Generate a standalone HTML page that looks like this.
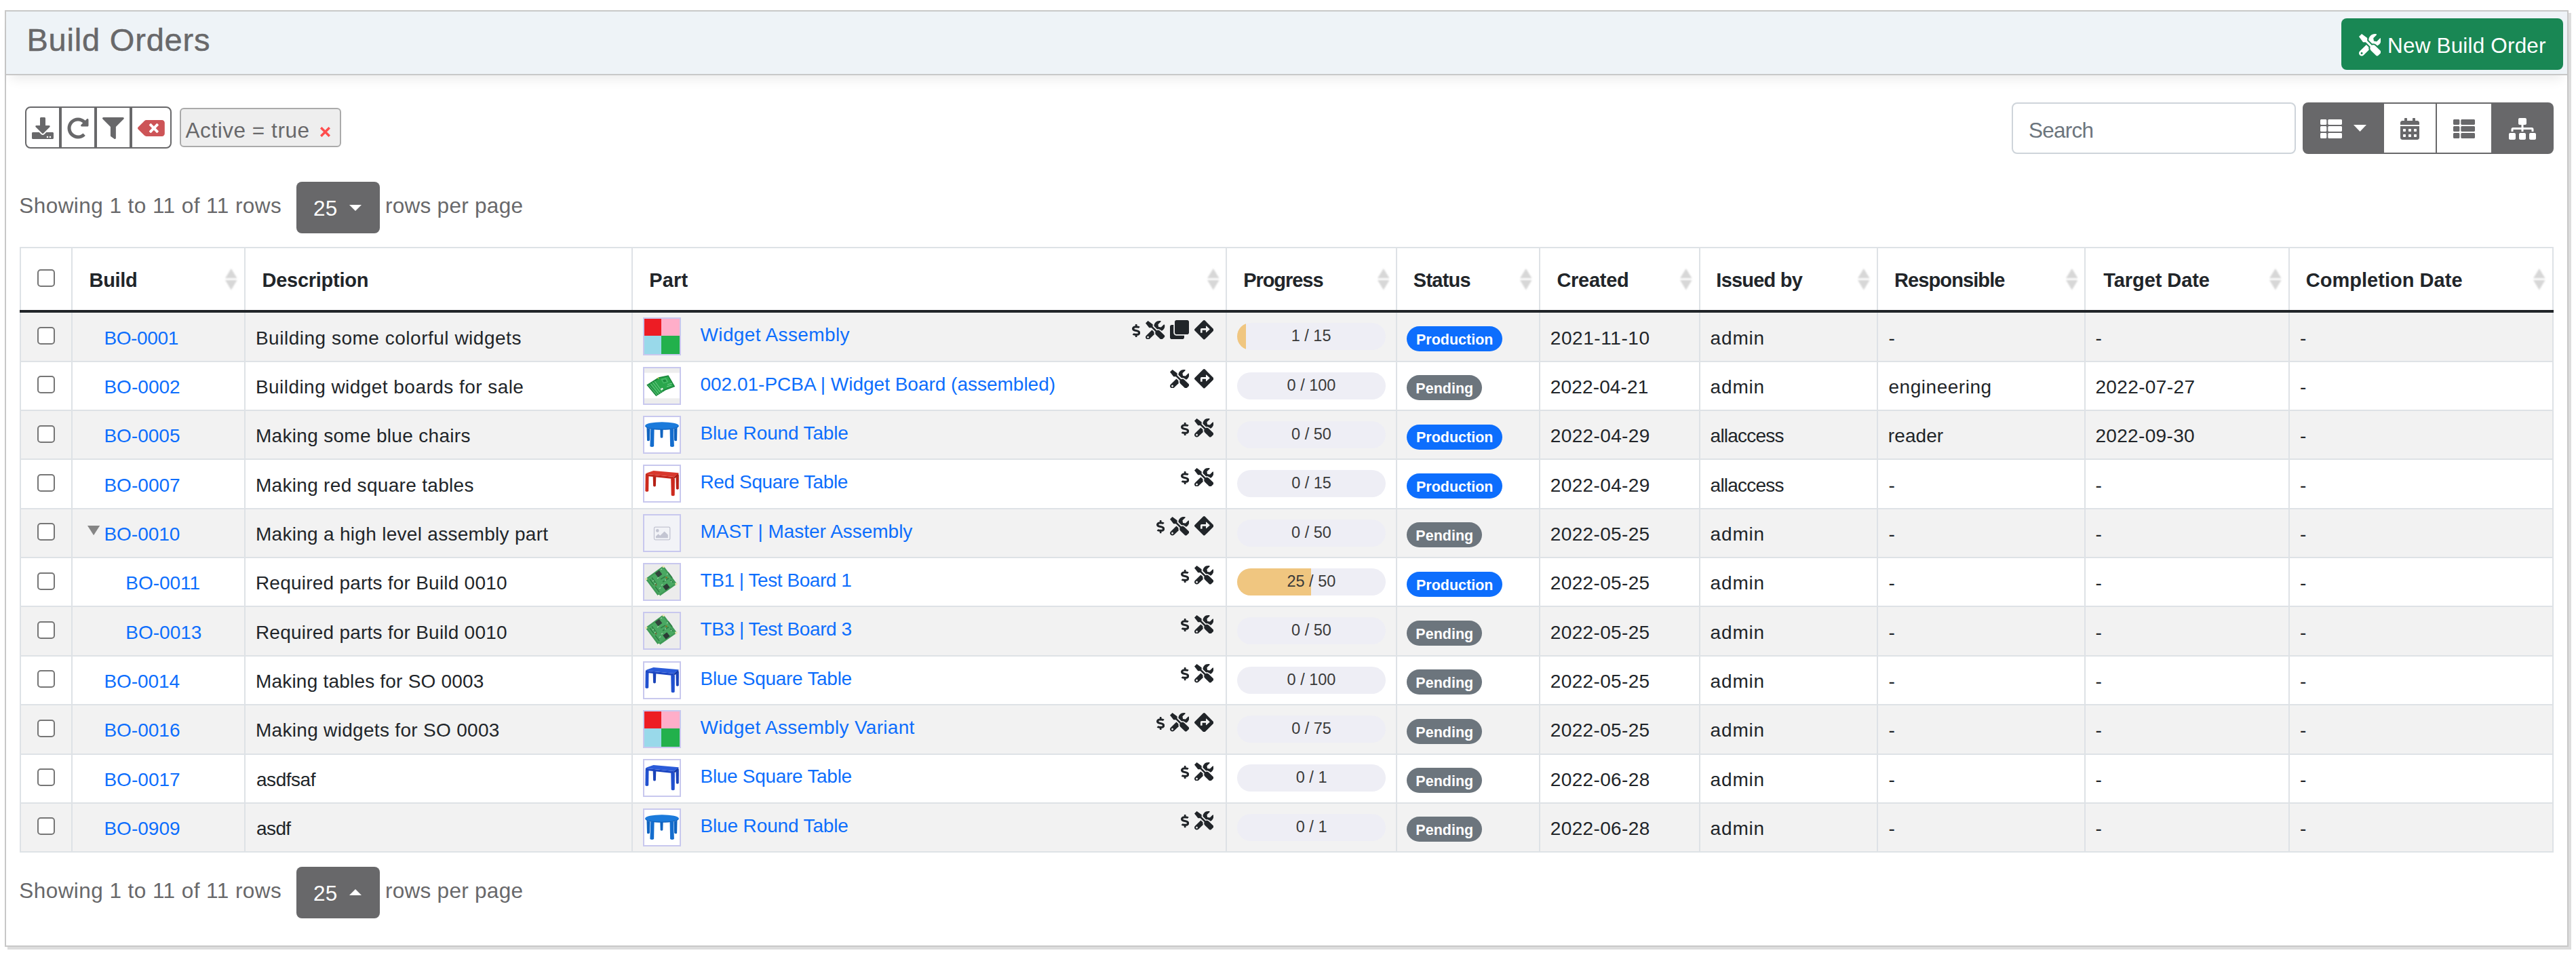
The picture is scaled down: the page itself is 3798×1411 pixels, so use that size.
<!DOCTYPE html>
<html lang="en"><head><meta charset="utf-8"><title>Build Orders</title>
<style>
html,body{margin:0;padding:0;background:#fff;}
body{width:3798px;height:1411px;position:relative;overflow:hidden;font-family:"Liberation Sans",sans-serif;}
#p div,#p span,#p svg{position:absolute;}
#p span{white-space:pre;line-height:1;}
#p svg svg{position:static;}
</style></head><body>
<div id="p">
<div style="left:7px;top:15px;width:3780px;height:1381px;background:#fff;border:2px solid #c8c8c8;box-sizing:border-box;box-shadow:4px 4px 0 #dddddd;"></div>
<div style="left:9px;top:17px;width:3776px;height:92px;background:#eef3f7;border-bottom:2px solid #c8c8c8;box-shadow:0 13px 16px -7px rgba(0,0,0,.08);"></div>
<span style="left:39.44px;top:32.00px;font-size:47px;color:#68686a;letter-spacing:0.804px;line-height:53px;-webkit-text-stroke:0.5px #68686a;">Build Orders</span>
<div style="left:3452px;top:27px;width:327px;height:76px;background:#198754;border-radius:8px;"></div>
<svg style="left:3477.50px;top:50.00px;width:32.50px;height:32.50px;" viewBox="0 0 512 512" preserveAspectRatio="none"><path fill="#fff" d="M501.1 395.7L384 278.6c-23.1-23.1-57.6-27.6-85.4-13.9L192 158.1V96L64 0 0 64l96 128h62.1l106.6 106.6c-13.6 27.8-9.2 62.3 13.9 85.4l117.1 117.1c14.6 14.6 38.2 14.6 52.7 0l52.7-52.7c14.5-14.6 14.5-38.2 0-52.7zM331.7 225c28.3 0 54.9 11 74.9 31l19.4 19.4c15.8-6.9 30.8-16.5 43.8-29.5 37.1-37.1 49.7-89.3 37.9-136.7-2.2-9-13.5-12.1-20.1-5.5l-74.4 74.4-67.9-11.3L334 98.9l74.4-74.4c6.6-6.6 3.4-17.9-5.7-20.2-47.4-11.7-99.6.9-136.6 37.9-28.5 28.5-41.9 66.1-41.2 103.6l82.1 82.1c8.1-1.9 16.5-2.9 24.7-2.9zm-103.9 82l-56.7-56.7L18.7 402.8c-25 25-25 65.5 0 90.5s65.5 25 90.5 0l123.6-123.6c-7.6-19.9-9.9-41.6-5-62.7zM64 472c-13.2 0-24-10.8-24-24 0-13.3 10.7-24 24-24s24 10.7 24 24c0 13.2-10.7 24-24 24z"/></svg>
<span style="left:3520.02px;top:49.00px;font-size:31.5px;color:#fff;letter-spacing:0.173px;line-height:36px;">New Build Order</span>
<div style="left:37px;top:157px;width:52px;height:62px;box-sizing:border-box;border:2px solid #68686a;border-radius:8px 0 0 8px;background:#fff;"></div>
<div style="left:89px;top:157px;width:52px;height:62px;box-sizing:border-box;border:2px solid #68686a;border-radius:0;background:#fff;"></div>
<div style="left:141px;top:157px;width:52px;height:62px;box-sizing:border-box;border:2px solid #68686a;border-radius:0;background:#fff;"></div>
<div style="left:193px;top:157px;width:60px;height:62px;box-sizing:border-box;border:2px solid #68686a;border-radius:0 8px 8px 0;background:#fff;"></div>
<svg style="left:47.10px;top:172.90px;width:32.00px;height:32.00px;" viewBox="0 0 512 512" preserveAspectRatio="none"><path fill="#68686a" d="M216 0h80c13.3 0 24 10.7 24 24v168h87.7c17.8 0 26.7 21.5 14.1 34.1L269.7 378.3c-7.5 7.5-19.8 7.5-27.3 0L90.1 226.1c-12.6-12.6-3.7-34.1 14.1-34.1H192V24c0-13.3 10.7-24 24-24zm296 376v112c0 13.3-10.7 24-24 24H24c-13.3 0-24-10.7-24-24V376c0-13.3 10.7-24 24-24h146.7l49 49c20.1 20.1 52.5 20.1 72.6 0l49-49H488c13.3 0 24 10.7 24 24zm-124 88c0-11-9-20-20-20s-20 9-20 20 9 20 20 20 20-9 20-20zm64 0c0-11-9-20-20-20s-20 9-20 20 9 20 20 20 20-9 20-20z"/></svg>
<svg style="left:98.90px;top:172.80px;width:32.00px;height:32.00px;" viewBox="0 0 512 512" preserveAspectRatio="none"><path fill="#68686a" d="M256.455 8c66.269.119 126.437 26.233 170.859 68.685l35.715-35.715C478.149 25.851 504 36.559 504 57.941V192c0 13.255-10.745 24-24 24H345.941c-21.382 0-32.09-25.851-16.971-40.971l41.75-41.75c-30.864-28.899-70.801-44.907-113.23-45.273-92.398-.798-170.283 73.977-169.484 169.442C88.764 348.009 162.184 424 256 424c41.127 0 79.997-14.678 110.629-41.556 4.743-4.161 11.906-3.908 16.368.553l39.662 39.662c4.872 4.872 4.631 12.815-.482 17.433C378.202 479.813 319.926 504 256 504 119.034 504 8.001 392.967 8 256.002 7.999 119.193 119.646 7.755 256.455 8z"/></svg>
<svg style="left:151.00px;top:172.90px;width:31.80px;height:32.00px;" viewBox="0 0 512 512" preserveAspectRatio="none"><path fill="#68686a" d="M487.976 0H24.028C2.71 0-8.047 25.866 7.058 40.971L192 225.941V432c0 7.831 3.821 15.17 10.237 19.662l80 55.98C298.02 518.69 320 507.493 320 487.98V225.941l184.947-184.97C520.021 25.896 509.338 0 487.976 0z"/></svg>
<svg style="left:203.20px;top:172.90px;width:39.80px;height:32.00px;" viewBox="0 0 640 512" preserveAspectRatio="none"><path fill="#cd5457" d="M576 64H205.26A63.97 63.97 0 0 0 160 82.75L9.37 233.37c-12.5 12.5-12.5 32.76 0 45.25L160 429.25c12 12 28.28 18.75 45.25 18.75H576c35.35 0 64-28.65 64-64V128c0-35.35-28.65-64-64-64zm-84.69 254.06c6.25 6.25 6.25 16.38 0 22.63l-22.62 22.62c-6.25 6.25-16.38 6.25-22.63 0L384 301.25l-62.06 62.06c-6.25 6.25-16.38 6.25-22.63 0l-22.62-22.62c-6.25-6.25-6.25-16.38 0-22.63L338.75 256l-62.06-62.06c-6.25-6.25-6.25-16.38 0-22.63l22.62-22.62c6.25-6.25 16.38-6.25 22.63 0L384 210.75l62.06-62.06c6.25-6.25 16.38-6.25 22.63 0l22.62 22.62c6.25 6.25 6.25 16.38 0 22.63L429.25 256l62.06 62.06z"/></svg>
<div style="left:265px;top:159px;width:238px;height:58px;box-sizing:border-box;border:2px solid #aaa;border-radius:6px;background:#eee;"></div>
<span style="left:273.54px;top:174.00px;font-size:31.5px;color:#68686a;letter-spacing:0.542px;line-height:36px;">Active = true</span>
<svg style="left:471.7px;top:187px;width:15px;height:15px" viewBox="0 0 15 15"><path d="M1.2 1.2 L13.8 13.8 M13.8 1.2 L1.2 13.8" stroke="#ff4d4d" stroke-width="3.5" fill="none"/></svg>
<div style="left:2966px;top:151px;width:418.5px;height:75.5px;box-sizing:border-box;border:2px solid #ced4da;border-radius:8px;background:#fff;"></div>
<span style="left:2991.07px;top:174.00px;font-size:31.5px;color:#6c757d;letter-spacing:-0.766px;line-height:36px;">Search</span>
<div style="left:3395px;top:151px;width:370px;height:75.5px;border-radius:8px;background:#68686a;"></div>
<div style="left:3514.7px;top:153px;width:158.3px;height:71.5px;background:#fff;"></div>
<div style="left:3590.5px;top:151px;width:2.5px;height:75.5px;background:#68686a;"></div>
<svg style="left:3421.00px;top:174.00px;width:32.00px;height:32.00px;" viewBox="0 0 512 512" preserveAspectRatio="none"><path fill="#fff" d="M149.333 216v80c0 13.255-10.745 24-24 24H24c-13.255 0-24-10.745-24-24v-80c0-13.255 10.745-24 24-24h101.333c13.255 0 24 10.745 24 24zM0 376v80c0 13.255 10.745 24 24 24h101.333c13.255 0 24-10.745 24-24v-80c0-13.255-10.745-24-24-24H24c-13.255 0-24 10.745-24 24zM125.333 32H24C10.745 32 0 42.745 0 56v80c0 13.255 10.745 24 24 24h101.333c13.255 0 24-10.745 24-24V56c0-13.255-10.745-24-24-24zm80 448H488c13.255 0 24-10.745 24-24v-80c0-13.255-10.745-24-24-24H205.333c-13.255 0-24 10.745-24 24v80c0 13.255 10.745 24 24 24zm-24-424v80c0 13.255 10.745 24 24 24H488c13.255 0 24-10.745 24-24V56c0-13.255-10.745-24-24-24H205.333c-13.255 0-24 10.745-24 24zm24 264H488c13.255 0 24-10.745 24-24v-80c0-13.255-10.745-24-24-24H205.333c-13.255 0-24 10.745-24 24v80c0 13.255 10.745 24 24 24z"/></svg>
<svg style="left:3470px;top:184px;width:19px;height:10px" viewBox="0 0 19 10"><path d="M0 0 H19 L9.5 10 Z" fill="#fff"/></svg>
<svg style="left:3539.00px;top:173.50px;width:28.00px;height:32.00px;" viewBox="0 0 448 512" preserveAspectRatio="none"><path fill="#68686a" d="M0 464c0 26.5 21.5 48 48 48h352c26.5 0 48-21.5 48-48V192H0v272zm320-196c0-6.6 5.4-12 12-12h40c6.6 0 12 5.4 12 12v40c0 6.6-5.4 12-12 12h-40c-6.6 0-12-5.4-12-12v-40zm0 128c0-6.6 5.4-12 12-12h40c6.6 0 12 5.4 12 12v40c0 6.6-5.4 12-12 12h-40c-6.6 0-12-5.4-12-12v-40zM192 268c0-6.6 5.4-12 12-12h40c6.6 0 12 5.4 12 12v40c0 6.6-5.4 12-12 12h-40c-6.6 0-12-5.4-12-12v-40zm0 128c0-6.6 5.4-12 12-12h40c6.6 0 12 5.4 12 12v40c0 6.6-5.4 12-12 12h-40c-6.6 0-12-5.4-12-12v-40zM64 268c0-6.6 5.4-12 12-12h40c6.6 0 12 5.4 12 12v40c0 6.6-5.4 12-12 12H76c-6.6 0-12-5.4-12-12v-40zm0 128c0-6.6 5.4-12 12-12h40c6.6 0 12 5.4 12 12v40c0 6.6-5.4 12-12 12H76c-6.6 0-12-5.4-12-12v-40zM400 64h-48V16c0-8.8-7.2-16-16-16h-32c-8.8 0-16 7.2-16 16v48H160V16c0-8.8-7.2-16-16-16h-32c-8.8 0-16 7.2-16 16v48H48C21.5 64 0 85.5 0 112v48h448v-48c0-26.5-21.5-48-48-48z"/></svg>
<svg style="left:3616.50px;top:174.00px;width:32.00px;height:32.00px;" viewBox="0 0 512 512" preserveAspectRatio="none"><path fill="#68686a" d="M149.333 216v80c0 13.255-10.745 24-24 24H24c-13.255 0-24-10.745-24-24v-80c0-13.255 10.745-24 24-24h101.333c13.255 0 24 10.745 24 24zM0 376v80c0 13.255 10.745 24 24 24h101.333c13.255 0 24-10.745 24-24v-80c0-13.255-10.745-24-24-24H24c-13.255 0-24 10.745-24 24zM125.333 32H24C10.745 32 0 42.745 0 56v80c0 13.255 10.745 24 24 24h101.333c13.255 0 24-10.745 24-24V56c0-13.255-10.745-24-24-24zm80 448H488c13.255 0 24-10.745 24-24v-80c0-13.255-10.745-24-24-24H205.333c-13.255 0-24 10.745-24 24v80c0 13.255 10.745 24 24 24zm-24-424v80c0 13.255 10.745 24 24 24H488c13.255 0 24-10.745 24-24V56c0-13.255-10.745-24-24-24H205.333c-13.255 0-24 10.745-24 24zm24 264H488c13.255 0 24-10.745 24-24v-80c0-13.255-10.745-24-24-24H205.333c-13.255 0-24 10.745-24 24v80c0 13.255 10.745 24 24 24z"/></svg>
<svg style="left:3698.50px;top:173.50px;width:40.00px;height:32.00px;" viewBox="0 0 640 512" preserveAspectRatio="none"><path fill="#fff" d="M128 352H32c-17.67 0-32 14.33-32 32v96c0 17.67 14.33 32 32 32h96c17.67 0 32-14.33 32-32v-96c0-17.67-14.33-32-32-32zm-24-80h192v48h48v-48h192v48h48v-57.59c0-21.17-17.23-38.41-38.41-38.41H344v-64h40c17.67 0 32-14.33 32-32V32c0-17.67-14.33-32-32-32H256c-17.67 0-32 14.33-32 32v96c0 17.67 14.33 32 32 32h40v64H94.41C73.23 224 56 241.23 56 262.41V320h48v-48zm264 80h-96c-17.67 0-32 14.33-32 32v96c0 17.67 14.33 32 32 32h96c17.67 0 32-14.33 32-32v-96c0-17.67-14.33-32-32-32zm240 0h-96c-17.67 0-32 14.33-32 32v96c0 17.67 14.33 32 32 32h96c17.67 0 32-14.33 32-32v-96c0-17.67-14.33-32-32-32z"/></svg>
<span style="left:28.27px;top:285.00px;font-size:31.5px;color:#68686a;letter-spacing:0.446px;line-height:36px;">Showing 1 to 11 of 11 rows</span>
<div style="left:437px;top:268px;width:122.5px;height:75.5px;border-radius:8px;background:#68686a;"></div>
<span style="left:462.12px;top:289.00px;font-size:31.5px;color:#fff;letter-spacing:0.069px;line-height:36px;">25</span>
<svg style="left:515px;top:301.5px;width:18px;height:9px" viewBox="0 0 18 9"><path d="M0 0 H18 L9 9 Z" fill="#fff"/></svg>
<span style="left:567.91px;top:285.00px;font-size:31.5px;color:#68686a;letter-spacing:0.290px;line-height:36px;">rows per page</span>
<span style="left:28.27px;top:1295.00px;font-size:31.5px;color:#68686a;letter-spacing:0.446px;line-height:36px;">Showing 1 to 11 of 11 rows</span>
<div style="left:437px;top:1278px;width:122.5px;height:75.5px;border-radius:8px;background:#68686a;"></div>
<span style="left:462.12px;top:1299.00px;font-size:31.5px;color:#fff;letter-spacing:0.069px;line-height:36px;">25</span>
<svg style="left:515px;top:1310.5px;width:18px;height:9px" viewBox="0 0 18 9"><path d="M0 9 H18 L9 0 Z" fill="#fff"/></svg>
<span style="left:567.91px;top:1295.00px;font-size:31.5px;color:#68686a;letter-spacing:0.290px;line-height:36px;">rows per page</span>
<div style="left:31.00px;top:461.00px;width:3732.00px;height:71.00px;background:#f2f2f2;"></div>
<div style="left:31.00px;top:606.00px;width:3732.00px;height:70.00px;background:#f2f2f2;"></div>
<div style="left:31.00px;top:751.00px;width:3732.00px;height:70.00px;background:#f2f2f2;"></div>
<div style="left:31.00px;top:895.00px;width:3732.00px;height:71.00px;background:#f2f2f2;"></div>
<div style="left:31.00px;top:1040.00px;width:3732.00px;height:71.00px;background:#f2f2f2;"></div>
<div style="left:31.00px;top:1185.00px;width:3732.00px;height:70.00px;background:#f2f2f2;"></div>
<div style="left:29.00px;top:364.00px;width:3736.00px;height:2.00px;background:#dee2e6;"></div>
<div style="left:29.00px;top:1255.00px;width:3736.00px;height:2.00px;background:#dee2e6;"></div>
<div style="left:29.00px;top:364.00px;width:2.00px;height:893.00px;background:#dee2e6;"></div>
<div style="left:3763.00px;top:364.00px;width:2.00px;height:893.00px;background:#dee2e6;"></div>
<div style="left:105.00px;top:364.00px;width:2.00px;height:893.00px;background:#dee2e6;"></div>
<div style="left:360.00px;top:364.00px;width:2.00px;height:893.00px;background:#dee2e6;"></div>
<div style="left:931.00px;top:364.00px;width:2.00px;height:893.00px;background:#dee2e6;"></div>
<div style="left:1807.00px;top:364.00px;width:2.00px;height:893.00px;background:#dee2e6;"></div>
<div style="left:2058.00px;top:364.00px;width:2.00px;height:893.00px;background:#dee2e6;"></div>
<div style="left:2269.00px;top:364.00px;width:2.00px;height:893.00px;background:#dee2e6;"></div>
<div style="left:2505.00px;top:364.00px;width:2.00px;height:893.00px;background:#dee2e6;"></div>
<div style="left:2767.00px;top:364.00px;width:2.00px;height:893.00px;background:#dee2e6;"></div>
<div style="left:3073.00px;top:364.00px;width:2.00px;height:893.00px;background:#dee2e6;"></div>
<div style="left:3374.00px;top:364.00px;width:2.00px;height:893.00px;background:#dee2e6;"></div>
<div style="left:29.00px;top:532.00px;width:3736.00px;height:2.00px;background:#dee2e6;"></div>
<div style="left:29.00px;top:604.00px;width:3736.00px;height:2.00px;background:#dee2e6;"></div>
<div style="left:29.00px;top:676.00px;width:3736.00px;height:2.00px;background:#dee2e6;"></div>
<div style="left:29.00px;top:749.00px;width:3736.00px;height:2.00px;background:#dee2e6;"></div>
<div style="left:29.00px;top:821.00px;width:3736.00px;height:2.00px;background:#dee2e6;"></div>
<div style="left:29.00px;top:893.00px;width:3736.00px;height:2.00px;background:#dee2e6;"></div>
<div style="left:29.00px;top:966.00px;width:3736.00px;height:2.00px;background:#dee2e6;"></div>
<div style="left:29.00px;top:1038.00px;width:3736.00px;height:2.00px;background:#dee2e6;"></div>
<div style="left:29.00px;top:1111.00px;width:3736.00px;height:2.00px;background:#dee2e6;"></div>
<div style="left:29.00px;top:1183.00px;width:3736.00px;height:2.00px;background:#dee2e6;"></div>
<div style="left:29.00px;top:457.00px;width:3736.00px;height:4.00px;background:#212529;"></div>
<div style="left:55px;top:397px;width:26px;height:26px;box-sizing:border-box;border:2px solid #767676;border-radius:5px;background:#fff;"></div>
<span style="left:131.56px;top:397.00px;font-size:29px;color:#212529;letter-spacing:-0.359px;line-height:32px;font-weight:700;">Build</span>
<svg style="left:332.1px;top:396.2px;width:17.6px;height:31.4px;filter:blur(0.8px)" viewBox="0 0 17 30" preserveAspectRatio="none"><path d="M8.5 0 L17 13.7 H0 Z M0 16.3 H17 L8.5 30 Z" fill="#d7d7d7"/></svg>
<span style="left:386.46px;top:397.00px;font-size:29px;color:#212529;letter-spacing:-0.259px;line-height:32px;font-weight:700;">Description</span>
<span style="left:957.26px;top:397.00px;font-size:29px;color:#212529;letter-spacing:0.160px;line-height:32px;font-weight:700;">Part</span>
<svg style="left:1780.0px;top:396.2px;width:17.6px;height:31.4px;filter:blur(0.8px)" viewBox="0 0 17 30" preserveAspectRatio="none"><path d="M8.5 0 L17 13.7 H0 Z M0 16.3 H17 L8.5 30 Z" fill="#d7d7d7"/></svg>
<span style="left:1833.16px;top:397.00px;font-size:29px;color:#212529;letter-spacing:-1.043px;line-height:32px;font-weight:700;">Progress</span>
<svg style="left:2030.6px;top:396.2px;width:17.6px;height:31.4px;filter:blur(0.8px)" viewBox="0 0 17 30" preserveAspectRatio="none"><path d="M8.5 0 L17 13.7 H0 Z M0 16.3 H17 L8.5 30 Z" fill="#d7d7d7"/></svg>
<span style="left:2083.86px;top:397.00px;font-size:29px;color:#212529;letter-spacing:-0.781px;line-height:32px;font-weight:700;">Status</span>
<svg style="left:2241.4px;top:396.2px;width:17.6px;height:31.4px;filter:blur(0.8px)" viewBox="0 0 17 30" preserveAspectRatio="none"><path d="M8.5 0 L17 13.7 H0 Z M0 16.3 H17 L8.5 30 Z" fill="#d7d7d7"/></svg>
<span style="left:2295.41px;top:397.00px;font-size:29px;color:#212529;letter-spacing:-0.264px;line-height:32px;font-weight:700;">Created</span>
<svg style="left:2477.0px;top:396.2px;width:17.6px;height:31.4px;filter:blur(0.8px)" viewBox="0 0 17 30" preserveAspectRatio="none"><path d="M8.5 0 L17 13.7 H0 Z M0 16.3 H17 L8.5 30 Z" fill="#d7d7d7"/></svg>
<span style="left:2530.36px;top:397.00px;font-size:29px;color:#212529;letter-spacing:-0.784px;line-height:32px;font-weight:700;">Issued by</span>
<svg style="left:2739.0px;top:396.2px;width:17.6px;height:31.4px;filter:blur(0.8px)" viewBox="0 0 17 30" preserveAspectRatio="none"><path d="M8.5 0 L17 13.7 H0 Z M0 16.3 H17 L8.5 30 Z" fill="#d7d7d7"/></svg>
<span style="left:2792.96px;top:397.00px;font-size:29px;color:#212529;letter-spacing:-0.890px;line-height:32px;font-weight:700;">Responsible</span>
<svg style="left:3045.6px;top:396.2px;width:17.6px;height:31.4px;filter:blur(0.8px)" viewBox="0 0 17 30" preserveAspectRatio="none"><path d="M8.5 0 L17 13.7 H0 Z M0 16.3 H17 L8.5 30 Z" fill="#d7d7d7"/></svg>
<span style="left:3101.27px;top:397.00px;font-size:29px;color:#212529;letter-spacing:-0.067px;line-height:32px;font-weight:700;">Target Date</span>
<svg style="left:3346.4px;top:396.2px;width:17.6px;height:31.4px;filter:blur(0.8px)" viewBox="0 0 17 30" preserveAspectRatio="none"><path d="M8.5 0 L17 13.7 H0 Z M0 16.3 H17 L8.5 30 Z" fill="#d7d7d7"/></svg>
<span style="left:3399.71px;top:397.00px;font-size:29px;color:#212529;letter-spacing:0.034px;line-height:32px;font-weight:700;">Completion Date</span>
<svg style="left:3735.4px;top:396.2px;width:17.6px;height:31.4px;filter:blur(0.8px)" viewBox="0 0 17 30" preserveAspectRatio="none"><path d="M8.5 0 L17 13.7 H0 Z M0 16.3 H17 L8.5 30 Z" fill="#d7d7d7"/></svg>
<div style="left:55px;top:482px;width:26px;height:26px;box-sizing:border-box;border:2px solid #767676;border-radius:5px;background:#fff;"></div>
<span style="left:153.40px;top:483.00px;font-size:28px;color:#0d6efd;letter-spacing:-0.368px;line-height:31px;">BO-0001</span>
<span style="left:376.90px;top:483.00px;font-size:28px;color:#212529;letter-spacing:0.513px;line-height:31px;">Building some colorful widgets</span>
<svg style="left:948px;top:468.4px;width:56px;height:56px" viewBox="0 0 56 56"><rect x="1" y="1" width="54" height="54" fill="#fff" stroke="#c8c8ee" stroke-width="2"/><svg x="2" y="2" width="52" height="52" viewBox="0 0 52 52"><rect width="25" height="25" fill="#ed1c24"/><rect x="25" width="27" height="25" fill="#ffaec9"/><rect y="25" width="25" height="27" fill="#99d9ea"/><rect x="25" y="25" width="27" height="27" fill="#22b14c"/></svg></svg>
<span style="left:1032.50px;top:478.00px;font-size:28px;color:#0d6efd;letter-spacing:0.379px;line-height:31px;">Widget Assembly</span>
<svg style="left:1760.80px;top:471.96px;width:28.60px;height:28.60px;" viewBox="0 0 512 512" preserveAspectRatio="none"><path fill="#212529" d="M502.61 233.32L278.68 9.39c-12.52-12.52-32.83-12.52-45.36 0L9.39 233.32c-12.52 12.53-12.52 32.83 0 45.36l223.93 223.93c12.52 12.53 32.83 12.53 45.36 0l223.93-223.93c12.52-12.53 12.52-32.83 0-45.36zm-100.98 12.56l-84.21 77.73c-5.12 4.73-13.43 1.1-13.43-5.88V264h-96v64c0 4.42-3.58 8-8 8h-32c-4.42 0-8-3.58-8-8v-80c0-17.67 14.33-32 32-32h112v-53.73c0-6.97 8.3-10.61 13.43-5.88l84.21 77.73c3.43 3.17 3.43 8.59 0 11.76z"/></svg>
<svg style="left:1725.30px;top:471.96px;width:28.00px;height:28.00px;" viewBox="0 0 512 512" preserveAspectRatio="none"><path fill="#212529" d="M464 0c26.51 0 48 21.49 48 48v288c0 26.51-21.49 48-48 48H176c-26.51 0-48-21.49-48-48V48c0-26.51 21.49-48 48-48h288M176 416c-44.112 0-80-35.888-80-80V128H48c-26.51 0-48 21.49-48 48v288c0 26.51 21.49 48 48 48h288c26.51 0 48-21.49 48-48v-48H176z"/></svg>
<svg style="left:1689.30px;top:472.56px;width:28.30px;height:27.60px;" viewBox="0 0 512 512" preserveAspectRatio="none"><path fill="#212529" d="M501.1 395.7L384 278.6c-23.1-23.1-57.6-27.6-85.4-13.9L192 158.1V96L64 0 0 64l96 128h62.1l106.6 106.6c-13.6 27.8-9.2 62.3 13.9 85.4l117.1 117.1c14.6 14.6 38.2 14.6 52.7 0l52.7-52.7c14.5-14.6 14.5-38.2 0-52.7zM331.7 225c28.3 0 54.9 11 74.9 31l19.4 19.4c15.8-6.9 30.8-16.5 43.8-29.5 37.1-37.1 49.7-89.3 37.9-136.7-2.2-9-13.5-12.1-20.1-5.5l-74.4 74.4-67.9-11.3L334 98.9l74.4-74.4c6.6-6.6 3.4-17.9-5.7-20.2-47.4-11.7-99.6.9-136.6 37.9-28.5 28.5-41.9 66.1-41.2 103.6l82.1 82.1c8.1-1.9 16.5-2.9 24.7-2.9zm-103.9 82l-56.7-56.7L18.7 402.8c-25 25-25 65.5 0 90.5s65.5 25 90.5 0l123.6-123.6c-7.6-19.9-9.9-41.6-5-62.7zM64 472c-13.2 0-24-10.8-24-24 0-13.3 10.7-24 24-24s24 10.7 24 24c0 13.2-10.7 24-24 24z"/></svg>
<svg style="left:1669.20px;top:477.96px;width:12.30px;height:19.20px;" viewBox="0 0 288 512" preserveAspectRatio="none"><path fill="#212529" d="M209.2 233.4l-108-31.6C88.7 198.2 80 186.5 80 173.5c0-16.3 13.2-29.5 29.5-29.5h66.3c12.2 0 24.2 3.7 34.2 10.5 6.1 4.1 14.3 3.1 19.5-2l34.8-34c7.1-6.9 6.1-18.4-1.8-24.5C238 74.8 207.4 64.1 176 64V16c0-8.8-7.2-16-16-16h-32c-8.8 0-16 7.2-16 16v48h-2.5C45.8 64-5.4 118.7.5 183.6c4.2 46.1 39.4 83.6 83.8 96.6l102.5 30c12.5 3.7 21.2 15.3 21.2 28.3 0 16.3-13.2 29.5-29.5 29.5h-66.3C100 368 88 364.3 78 357.5c-6.1-4.1-14.3-3.1-19.5 2l-34.8 34c-7.1 6.9-6.1 18.4 1.8 24.5 24.5 19.2 55.1 29.9 86.5 30v48c0 8.8 7.2 16 16 16h32c8.8 0 16-7.2 16-16v-48.2c46.6-.9 90.3-28.6 105.7-72.7 21.5-61.6-14.6-124.8-72.5-141.7z"/></svg>
<div style="left:1823.80px;top:476.26px;width:219.30px;height:40.00px;background:#eeeef5;border-radius:20px;overflow:hidden;"></div>
<div style="left:1823.8px;top:476.26px;width:219.3px;height:40px;border-radius:20px;overflow:hidden;"><div style="left:0;top:0;width:13.2px;height:40px;background:#f0c680;"></div></div>
<span style="left:1903.70px;top:482.00px;font-size:23.5px;color:#3a3a3a;letter-spacing:0.000px;line-height:26px;">1 / 15</span>
<div style="left:2074.00px;top:480.86px;width:141.00px;height:37.20px;background:#0d6efd;border-radius:18.6px;"></div>
<span style="left:2087.96px;top:489.00px;font-size:21.5px;color:#fff;letter-spacing:0.001px;line-height:24px;font-weight:700;">Production</span>
<span style="left:2285.79px;top:483.00px;font-size:28px;color:#212529;letter-spacing:0.572px;line-height:31px;">2021-11-10</span>
<span style="left:2521.61px;top:483.00px;font-size:28px;color:#212529;letter-spacing:0.811px;line-height:31px;">admin</span>
<span style="left:2784.46px;top:483.00px;font-size:28px;color:#212529;letter-spacing:0.000px;line-height:31px;">-</span>
<span style="left:3089.56px;top:483.00px;font-size:28px;color:#212529;letter-spacing:0.000px;line-height:31px;">-</span>
<span style="left:3391.06px;top:483.00px;font-size:28px;color:#212529;letter-spacing:0.000px;line-height:31px;">-</span>
<div style="left:55px;top:554px;width:26px;height:26px;box-sizing:border-box;border:2px solid #767676;border-radius:5px;background:#fff;"></div>
<span style="left:153.40px;top:555.00px;font-size:28px;color:#0d6efd;letter-spacing:0.039px;line-height:31px;">BO-0002</span>
<span style="left:376.90px;top:555.00px;font-size:28px;color:#212529;letter-spacing:0.457px;line-height:31px;">Building widget boards for sale</span>
<svg style="left:948px;top:540.7px;width:56px;height:56px" viewBox="0 0 56 56"><rect x="1" y="1" width="54" height="54" fill="#fff" stroke="#c8c8ee" stroke-width="2"/><svg x="2" y="2" width="52" height="52" viewBox="0 0 52 52"><rect width="52" height="52" fill="#fff"/><rect width="52" height="6.7" fill="#ededed"/><rect y="44.3" width="52" height="7.7" fill="#ededed"/><path d="M3.3 24.5 L21 13.2 L35.5 10.2 L45.3 27.1 L31 32.5 L17.3 41.2 Z" fill="#17873a"/><path d="M8 24 L22 15 L35 12 L43 26.5 L30 31 L18.5 38.5 Z" fill="#2aa64c"/><path d="M6 24.3 L19 40 M9 22.4 L21.5 38 M12 20.5 L24 36.3 M15 18.6 L26.5 34.6" stroke="#7fd096" stroke-width=".9" fill="none"/><path d="M24.5 16 L32 14.2 L35.5 20.3 L28 22.5 Z" fill="#49bd6a"/><path d="M26.8 17.2 L31 16.2 L33 19.6 L28.7 20.8 Z" fill="#1c8d3e"/><rect x="24.5" y="29.3" width="3" height="2.4" fill="#f4f4f4" transform="rotate(-20 26 30.5)"/><circle cx="20.5" cy="14.4" r="1" fill="#e8d44a"/><path d="M34 24 L41 22 M33 27 L40 25" stroke="#8fd9a4" stroke-width=".8"/></svg></svg>
<span style="left:1032.50px;top:551.00px;font-size:28px;color:#0d6efd;letter-spacing:-0.012px;line-height:31px;">002.01-PCBA | Widget Board (assembled)</span>
<svg style="left:1760.80px;top:544.30px;width:28.60px;height:28.60px;" viewBox="0 0 512 512" preserveAspectRatio="none"><path fill="#212529" d="M502.61 233.32L278.68 9.39c-12.52-12.52-32.83-12.52-45.36 0L9.39 233.32c-12.52 12.53-12.52 32.83 0 45.36l223.93 223.93c12.52 12.53 32.83 12.53 45.36 0l223.93-223.93c12.52-12.53 12.52-32.83 0-45.36zm-100.98 12.56l-84.21 77.73c-5.12 4.73-13.43 1.1-13.43-5.88V264h-96v64c0 4.42-3.58 8-8 8h-32c-4.42 0-8-3.58-8-8v-80c0-17.67 14.33-32 32-32h112v-53.73c0-6.97 8.3-10.61 13.43-5.88l84.21 77.73c3.43 3.17 3.43 8.59 0 11.76z"/></svg>
<svg style="left:1725.00px;top:544.90px;width:28.30px;height:27.60px;" viewBox="0 0 512 512" preserveAspectRatio="none"><path fill="#212529" d="M501.1 395.7L384 278.6c-23.1-23.1-57.6-27.6-85.4-13.9L192 158.1V96L64 0 0 64l96 128h62.1l106.6 106.6c-13.6 27.8-9.2 62.3 13.9 85.4l117.1 117.1c14.6 14.6 38.2 14.6 52.7 0l52.7-52.7c14.5-14.6 14.5-38.2 0-52.7zM331.7 225c28.3 0 54.9 11 74.9 31l19.4 19.4c15.8-6.9 30.8-16.5 43.8-29.5 37.1-37.1 49.7-89.3 37.9-136.7-2.2-9-13.5-12.1-20.1-5.5l-74.4 74.4-67.9-11.3L334 98.9l74.4-74.4c6.6-6.6 3.4-17.9-5.7-20.2-47.4-11.7-99.6.9-136.6 37.9-28.5 28.5-41.9 66.1-41.2 103.6l82.1 82.1c8.1-1.9 16.5-2.9 24.7-2.9zm-103.9 82l-56.7-56.7L18.7 402.8c-25 25-25 65.5 0 90.5s65.5 25 90.5 0l123.6-123.6c-7.6-19.9-9.9-41.6-5-62.7zM64 472c-13.2 0-24-10.8-24-24 0-13.3 10.7-24 24-24s24 10.7 24 24c0 13.2-10.7 24-24 24z"/></svg>
<div style="left:1823.80px;top:548.60px;width:219.30px;height:40.00px;background:#eeeef5;border-radius:20px;overflow:hidden;"></div>
<span style="left:1897.57px;top:555.00px;font-size:23.5px;color:#3a3a3a;letter-spacing:0.000px;line-height:26px;">0 / 100</span>
<div style="left:2074.00px;top:553.20px;width:110.80px;height:37.20px;background:#6c757d;border-radius:18.6px;"></div>
<span style="left:2087.36px;top:561.00px;font-size:21.5px;color:#fff;letter-spacing:0.012px;line-height:24px;font-weight:700;">Pending</span>
<span style="left:2285.79px;top:555.00px;font-size:28px;color:#212529;letter-spacing:0.150px;line-height:31px;">2022-04-21</span>
<span style="left:2521.61px;top:555.00px;font-size:28px;color:#212529;letter-spacing:0.811px;line-height:31px;">admin</span>
<span style="left:2784.51px;top:555.00px;font-size:28px;color:#212529;letter-spacing:0.525px;line-height:31px;">engineering</span>
<span style="left:3089.39px;top:555.00px;font-size:28px;color:#212529;letter-spacing:0.377px;line-height:31px;">2022-07-27</span>
<span style="left:3391.06px;top:555.00px;font-size:28px;color:#212529;letter-spacing:0.000px;line-height:31px;">-</span>
<div style="left:55px;top:627px;width:26px;height:26px;box-sizing:border-box;border:2px solid #767676;border-radius:5px;background:#fff;"></div>
<span style="left:153.40px;top:627.00px;font-size:28px;color:#0d6efd;letter-spacing:0.001px;line-height:31px;">BO-0005</span>
<span style="left:376.90px;top:627.00px;font-size:28px;color:#212529;letter-spacing:0.314px;line-height:31px;">Making some blue chairs</span>
<svg style="left:948px;top:613.0px;width:56px;height:56px" viewBox="0 0 56 56"><rect x="1" y="1" width="54" height="54" fill="#fff" stroke="#c8c8ee" stroke-width="2"/><svg x="2" y="2" width="52" height="52" viewBox="0 0 52 52"><rect width="52" height="52" fill="#fff"/><path d="M3.5 15.5 L8.5 17.5 L7.9 34.3 Q6 36.2 4 34.6 Z" fill="#0f63c0"/><path d="M43.5 17.5 L48.5 15.5 L48.1 34.6 Q46.2 36.2 44.2 34.3 Z" fill="#0f63c0"/><path d="M23.3 17 L27.7 17 L27.3 30 Q25.5 31.6 23.7 30 Z" fill="#0f63c0"/><path d="M9.3 17 L14.6 18 L14.1 43 Q11.3 45 8.4 43 Z" fill="#146dce"/><path d="M37.6 18 L43 17 L43.9 43 Q41 45 38.1 43 Z" fill="#146dce"/><ellipse cx="26" cy="13.6" rx="24.7" ry="5.2" fill="#0f63c0"/><ellipse cx="26" cy="12.4" rx="24.7" ry="5.1" fill="#1b7adb"/></svg></svg>
<span style="left:1032.50px;top:623.00px;font-size:28px;color:#0d6efd;letter-spacing:-0.140px;line-height:31px;">Blue Round Table</span>
<svg style="left:1761.10px;top:617.24px;width:28.30px;height:27.60px;" viewBox="0 0 512 512" preserveAspectRatio="none"><path fill="#212529" d="M501.1 395.7L384 278.6c-23.1-23.1-57.6-27.6-85.4-13.9L192 158.1V96L64 0 0 64l96 128h62.1l106.6 106.6c-13.6 27.8-9.2 62.3 13.9 85.4l117.1 117.1c14.6 14.6 38.2 14.6 52.7 0l52.7-52.7c14.5-14.6 14.5-38.2 0-52.7zM331.7 225c28.3 0 54.9 11 74.9 31l19.4 19.4c15.8-6.9 30.8-16.5 43.8-29.5 37.1-37.1 49.7-89.3 37.9-136.7-2.2-9-13.5-12.1-20.1-5.5l-74.4 74.4-67.9-11.3L334 98.9l74.4-74.4c6.6-6.6 3.4-17.9-5.7-20.2-47.4-11.7-99.6.9-136.6 37.9-28.5 28.5-41.9 66.1-41.2 103.6l82.1 82.1c8.1-1.9 16.5-2.9 24.7-2.9zm-103.9 82l-56.7-56.7L18.7 402.8c-25 25-25 65.5 0 90.5s65.5 25 90.5 0l123.6-123.6c-7.6-19.9-9.9-41.6-5-62.7zM64 472c-13.2 0-24-10.8-24-24 0-13.3 10.7-24 24-24s24 10.7 24 24c0 13.2-10.7 24-24 24z"/></svg>
<svg style="left:1741.00px;top:622.64px;width:12.30px;height:19.20px;" viewBox="0 0 288 512" preserveAspectRatio="none"><path fill="#212529" d="M209.2 233.4l-108-31.6C88.7 198.2 80 186.5 80 173.5c0-16.3 13.2-29.5 29.5-29.5h66.3c12.2 0 24.2 3.7 34.2 10.5 6.1 4.1 14.3 3.1 19.5-2l34.8-34c7.1-6.9 6.1-18.4-1.8-24.5C238 74.8 207.4 64.1 176 64V16c0-8.8-7.2-16-16-16h-32c-8.8 0-16 7.2-16 16v48h-2.5C45.8 64-5.4 118.7.5 183.6c4.2 46.1 39.4 83.6 83.8 96.6l102.5 30c12.5 3.7 21.2 15.3 21.2 28.3 0 16.3-13.2 29.5-29.5 29.5h-66.3C100 368 88 364.3 78 357.5c-6.1-4.1-14.3-3.1-19.5 2l-34.8 34c-7.1 6.9-6.1 18.4 1.8 24.5 24.5 19.2 55.1 29.9 86.5 30v48c0 8.8 7.2 16 16 16h32c8.8 0 16-7.2 16-16v-48.2c46.6-.9 90.3-28.6 105.7-72.7 21.5-61.6-14.6-124.8-72.5-141.7z"/></svg>
<div style="left:1823.80px;top:620.94px;width:219.30px;height:40.00px;background:#eeeef5;border-radius:20px;overflow:hidden;"></div>
<span style="left:1904.10px;top:627.00px;font-size:23.5px;color:#3a3a3a;letter-spacing:0.000px;line-height:26px;">0 / 50</span>
<div style="left:2074.00px;top:625.54px;width:141.00px;height:37.20px;background:#0d6efd;border-radius:18.6px;"></div>
<span style="left:2087.96px;top:633.00px;font-size:21.5px;color:#fff;letter-spacing:0.001px;line-height:24px;font-weight:700;">Production</span>
<span style="left:2285.79px;top:627.00px;font-size:28px;color:#212529;letter-spacing:0.367px;line-height:31px;">2022-04-29</span>
<span style="left:2521.61px;top:627.00px;font-size:28px;color:#212529;letter-spacing:-0.795px;line-height:31px;">allaccess</span>
<span style="left:2783.84px;top:627.00px;font-size:28px;color:#212529;letter-spacing:0.077px;line-height:31px;">reader</span>
<span style="left:3089.39px;top:627.00px;font-size:28px;color:#212529;letter-spacing:0.342px;line-height:31px;">2022-09-30</span>
<span style="left:3391.06px;top:627.00px;font-size:28px;color:#212529;letter-spacing:0.000px;line-height:31px;">-</span>
<div style="left:55px;top:699px;width:26px;height:26px;box-sizing:border-box;border:2px solid #767676;border-radius:5px;background:#fff;"></div>
<span style="left:153.40px;top:700.00px;font-size:28px;color:#0d6efd;letter-spacing:0.039px;line-height:31px;">BO-0007</span>
<span style="left:376.90px;top:700.00px;font-size:28px;color:#212529;letter-spacing:0.313px;line-height:31px;">Making red square tables</span>
<svg style="left:948px;top:685.4px;width:56px;height:56px" viewBox="0 0 56 56"><rect x="1" y="1" width="54" height="54" fill="#fff" stroke="#c8c8ee" stroke-width="2"/><svg x="2" y="2" width="52" height="52" viewBox="0 0 52 52"><rect width="52" height="52" fill="#fff"/><path d="M12.7 15.5 L17.3 16 L16.9 29.6 Q15 31.4 13.1 29.6 Z" fill="#b52116"/><path d="M46.4 14.5 L50.9 13 L50.8 33.8 Q48.8 35.6 46.9 33.8 Z" fill="#b52116"/><path d="M1.7 14.2 L6.5 15 L6.2 37 Q3.8 39 1.4 37 Z" fill="#cc2a1e"/><path d="M39.2 18.3 L44.9 19 L44.7 43.2 Q42.2 45.2 39.7 43.2 Z" fill="#cc2a1e"/><path d="M1.8 11.7 L43.8 15.9 L43.8 19.2 L1.8 14.8 Z" fill="#c2261b"/><path d="M43.8 15.9 L50.4 10.2 L50.4 13.6 L43.8 19.2 Z" fill="#a81d13"/><path d="M1.8 11.7 Q2 10.8 13.5 7.1 L50.4 10.2 Q50.6 11 43.8 15.9 Z" fill="#d8372c"/></svg></svg>
<span style="left:1032.50px;top:695.00px;font-size:28px;color:#0d6efd;letter-spacing:-0.387px;line-height:31px;">Red Square Table</span>
<svg style="left:1761.10px;top:689.58px;width:28.30px;height:27.60px;" viewBox="0 0 512 512" preserveAspectRatio="none"><path fill="#212529" d="M501.1 395.7L384 278.6c-23.1-23.1-57.6-27.6-85.4-13.9L192 158.1V96L64 0 0 64l96 128h62.1l106.6 106.6c-13.6 27.8-9.2 62.3 13.9 85.4l117.1 117.1c14.6 14.6 38.2 14.6 52.7 0l52.7-52.7c14.5-14.6 14.5-38.2 0-52.7zM331.7 225c28.3 0 54.9 11 74.9 31l19.4 19.4c15.8-6.9 30.8-16.5 43.8-29.5 37.1-37.1 49.7-89.3 37.9-136.7-2.2-9-13.5-12.1-20.1-5.5l-74.4 74.4-67.9-11.3L334 98.9l74.4-74.4c6.6-6.6 3.4-17.9-5.7-20.2-47.4-11.7-99.6.9-136.6 37.9-28.5 28.5-41.9 66.1-41.2 103.6l82.1 82.1c8.1-1.9 16.5-2.9 24.7-2.9zm-103.9 82l-56.7-56.7L18.7 402.8c-25 25-25 65.5 0 90.5s65.5 25 90.5 0l123.6-123.6c-7.6-19.9-9.9-41.6-5-62.7zM64 472c-13.2 0-24-10.8-24-24 0-13.3 10.7-24 24-24s24 10.7 24 24c0 13.2-10.7 24-24 24z"/></svg>
<svg style="left:1741.00px;top:694.98px;width:12.30px;height:19.20px;" viewBox="0 0 288 512" preserveAspectRatio="none"><path fill="#212529" d="M209.2 233.4l-108-31.6C88.7 198.2 80 186.5 80 173.5c0-16.3 13.2-29.5 29.5-29.5h66.3c12.2 0 24.2 3.7 34.2 10.5 6.1 4.1 14.3 3.1 19.5-2l34.8-34c7.1-6.9 6.1-18.4-1.8-24.5C238 74.8 207.4 64.1 176 64V16c0-8.8-7.2-16-16-16h-32c-8.8 0-16 7.2-16 16v48h-2.5C45.8 64-5.4 118.7.5 183.6c4.2 46.1 39.4 83.6 83.8 96.6l102.5 30c12.5 3.7 21.2 15.3 21.2 28.3 0 16.3-13.2 29.5-29.5 29.5h-66.3C100 368 88 364.3 78 357.5c-6.1-4.1-14.3-3.1-19.5 2l-34.8 34c-7.1 6.9-6.1 18.4 1.8 24.5 24.5 19.2 55.1 29.9 86.5 30v48c0 8.8 7.2 16 16 16h32c8.8 0 16-7.2 16-16v-48.2c46.6-.9 90.3-28.6 105.7-72.7 21.5-61.6-14.6-124.8-72.5-141.7z"/></svg>
<div style="left:1823.80px;top:693.28px;width:219.30px;height:40.00px;background:#eeeef5;border-radius:20px;overflow:hidden;"></div>
<span style="left:1904.14px;top:699.00px;font-size:23.5px;color:#3a3a3a;letter-spacing:0.000px;line-height:26px;">0 / 15</span>
<div style="left:2074.00px;top:697.88px;width:141.00px;height:37.20px;background:#0d6efd;border-radius:18.6px;"></div>
<span style="left:2087.96px;top:706.00px;font-size:21.5px;color:#fff;letter-spacing:0.001px;line-height:24px;font-weight:700;">Production</span>
<span style="left:2285.79px;top:700.00px;font-size:28px;color:#212529;letter-spacing:0.367px;line-height:31px;">2022-04-29</span>
<span style="left:2521.61px;top:700.00px;font-size:28px;color:#212529;letter-spacing:-0.795px;line-height:31px;">allaccess</span>
<span style="left:2784.46px;top:700.00px;font-size:28px;color:#212529;letter-spacing:0.000px;line-height:31px;">-</span>
<span style="left:3089.56px;top:700.00px;font-size:28px;color:#212529;letter-spacing:0.000px;line-height:31px;">-</span>
<span style="left:3391.06px;top:700.00px;font-size:28px;color:#212529;letter-spacing:0.000px;line-height:31px;">-</span>
<div style="left:55px;top:771px;width:26px;height:26px;box-sizing:border-box;border:2px solid #767676;border-radius:5px;background:#fff;"></div>
<span style="left:153.40px;top:772.00px;font-size:28px;color:#0d6efd;letter-spacing:-0.013px;line-height:31px;">BO-0010</span>
<svg style="left:128.8px;top:775.0px;width:18.2px;height:14.2px" viewBox="0 0 17 14" preserveAspectRatio="none"><path d="M0 0 H17 L8.5 14 Z" fill="#858585"/></svg>
<span style="left:376.90px;top:772.00px;font-size:28px;color:#212529;letter-spacing:0.295px;line-height:31px;">Making a high level assembly part</span>
<svg style="left:948px;top:757.7px;width:56px;height:56px" viewBox="0 0 56 56"><rect x="1" y="1" width="54" height="54" fill="#fff" stroke="#c8c8ee" stroke-width="2"/><svg x="2" y="2" width="52" height="52" viewBox="0 0 52 52"><rect width="52" height="52" fill="#f2f3f7"/><rect x="14.5" y="17.2" width="23.3" height="18.7" rx="1.8" fill="none" stroke="#c3c5d2" stroke-width="1.3"/><circle cx="19.3" cy="22.4" r="2.3" fill="#c3c5d2"/><path d="M17 33.3 L17 30.8 L20.6 27.3 L23.2 29.8 L29.6 23.4 L34.8 28.6 L34.8 33.3 Z" fill="#c3c5d2"/></svg></svg>
<span style="left:1032.50px;top:768.00px;font-size:28px;color:#0d6efd;letter-spacing:-0.020px;line-height:31px;">MAST | Master Assembly</span>
<svg style="left:1760.80px;top:761.32px;width:28.60px;height:28.60px;" viewBox="0 0 512 512" preserveAspectRatio="none"><path fill="#212529" d="M502.61 233.32L278.68 9.39c-12.52-12.52-32.83-12.52-45.36 0L9.39 233.32c-12.52 12.53-12.52 32.83 0 45.36l223.93 223.93c12.52 12.53 32.83 12.53 45.36 0l223.93-223.93c12.52-12.53 12.52-32.83 0-45.36zm-100.98 12.56l-84.21 77.73c-5.12 4.73-13.43 1.1-13.43-5.88V264h-96v64c0 4.42-3.58 8-8 8h-32c-4.42 0-8-3.58-8-8v-80c0-17.67 14.33-32 32-32h112v-53.73c0-6.97 8.3-10.61 13.43-5.88l84.21 77.73c3.43 3.17 3.43 8.59 0 11.76z"/></svg>
<svg style="left:1725.00px;top:761.92px;width:28.30px;height:27.60px;" viewBox="0 0 512 512" preserveAspectRatio="none"><path fill="#212529" d="M501.1 395.7L384 278.6c-23.1-23.1-57.6-27.6-85.4-13.9L192 158.1V96L64 0 0 64l96 128h62.1l106.6 106.6c-13.6 27.8-9.2 62.3 13.9 85.4l117.1 117.1c14.6 14.6 38.2 14.6 52.7 0l52.7-52.7c14.5-14.6 14.5-38.2 0-52.7zM331.7 225c28.3 0 54.9 11 74.9 31l19.4 19.4c15.8-6.9 30.8-16.5 43.8-29.5 37.1-37.1 49.7-89.3 37.9-136.7-2.2-9-13.5-12.1-20.1-5.5l-74.4 74.4-67.9-11.3L334 98.9l74.4-74.4c6.6-6.6 3.4-17.9-5.7-20.2-47.4-11.7-99.6.9-136.6 37.9-28.5 28.5-41.9 66.1-41.2 103.6l82.1 82.1c8.1-1.9 16.5-2.9 24.7-2.9zm-103.9 82l-56.7-56.7L18.7 402.8c-25 25-25 65.5 0 90.5s65.5 25 90.5 0l123.6-123.6c-7.6-19.9-9.9-41.6-5-62.7zM64 472c-13.2 0-24-10.8-24-24 0-13.3 10.7-24 24-24s24 10.7 24 24c0 13.2-10.7 24-24 24z"/></svg>
<svg style="left:1704.90px;top:767.32px;width:12.30px;height:19.20px;" viewBox="0 0 288 512" preserveAspectRatio="none"><path fill="#212529" d="M209.2 233.4l-108-31.6C88.7 198.2 80 186.5 80 173.5c0-16.3 13.2-29.5 29.5-29.5h66.3c12.2 0 24.2 3.7 34.2 10.5 6.1 4.1 14.3 3.1 19.5-2l34.8-34c7.1-6.9 6.1-18.4-1.8-24.5C238 74.8 207.4 64.1 176 64V16c0-8.8-7.2-16-16-16h-32c-8.8 0-16 7.2-16 16v48h-2.5C45.8 64-5.4 118.7.5 183.6c4.2 46.1 39.4 83.6 83.8 96.6l102.5 30c12.5 3.7 21.2 15.3 21.2 28.3 0 16.3-13.2 29.5-29.5 29.5h-66.3C100 368 88 364.3 78 357.5c-6.1-4.1-14.3-3.1-19.5 2l-34.8 34c-7.1 6.9-6.1 18.4 1.8 24.5 24.5 19.2 55.1 29.9 86.5 30v48c0 8.8 7.2 16 16 16h32c8.8 0 16-7.2 16-16v-48.2c46.6-.9 90.3-28.6 105.7-72.7 21.5-61.6-14.6-124.8-72.5-141.7z"/></svg>
<div style="left:1823.80px;top:765.62px;width:219.30px;height:40.00px;background:#eeeef5;border-radius:20px;overflow:hidden;"></div>
<span style="left:1904.10px;top:772.00px;font-size:23.5px;color:#3a3a3a;letter-spacing:0.000px;line-height:26px;">0 / 50</span>
<div style="left:2074.00px;top:770.22px;width:110.80px;height:37.20px;background:#6c757d;border-radius:18.6px;"></div>
<span style="left:2087.36px;top:778.00px;font-size:21.5px;color:#fff;letter-spacing:0.012px;line-height:24px;font-weight:700;">Pending</span>
<span style="left:2285.79px;top:772.00px;font-size:28px;color:#212529;letter-spacing:0.351px;line-height:31px;">2022-05-25</span>
<span style="left:2521.61px;top:772.00px;font-size:28px;color:#212529;letter-spacing:0.811px;line-height:31px;">admin</span>
<span style="left:2784.46px;top:772.00px;font-size:28px;color:#212529;letter-spacing:0.000px;line-height:31px;">-</span>
<span style="left:3089.56px;top:772.00px;font-size:28px;color:#212529;letter-spacing:0.000px;line-height:31px;">-</span>
<span style="left:3391.06px;top:772.00px;font-size:28px;color:#212529;letter-spacing:0.000px;line-height:31px;">-</span>
<div style="left:55px;top:844px;width:26px;height:26px;box-sizing:border-box;border:2px solid #767676;border-radius:5px;background:#fff;"></div>
<span style="left:185.30px;top:844.00px;font-size:28px;color:#0d6efd;letter-spacing:-0.021px;line-height:31px;">BO-0011</span>
<span style="left:376.90px;top:844.00px;font-size:28px;color:#212529;letter-spacing:0.231px;line-height:31px;">Required parts for Build 0010</span>
<svg style="left:948px;top:830.1px;width:56px;height:56px" viewBox="0 0 56 56"><rect x="1" y="1" width="54" height="54" fill="#fff" stroke="#c8c8ee" stroke-width="2"/><svg x="2" y="2" width="52" height="52" viewBox="0 0 52 52"><rect width="52" height="52" fill="#ececec"/><path d="M28.2 2.1 L48.3 29.1 L21.1 48 L1.4 21.5 Z" fill="#3f9a56"/><path d="M28 5.5 L45 28.5 L21.6 44.6 L4.6 21.8 Z" fill="#4aa862"/><rect x="17.2" y="10.2" width="7.6" height="7.6" fill="#33463d" transform="rotate(53 21 14)"/><rect x="28.8" y="29.6" width="7.4" height="7.4" fill="#2b3c35" transform="rotate(53 32.4 33.3)"/><path d="M8 22 L14 30 M11 19.5 L18 29 M24 22 L31 18 M27 26 L36 20.5 M16 33 L22 41 M35 12 L41 20 M38 23 L43 27" stroke="#2f7f45" stroke-width="1.6" fill="none"/><path d="M12 25 l2 -1.4 M15 29 l2 -1.4 M22 36 l2.2 -1.5 M25 31 l2 -1.3 M33 15 l2 -1.4 M30 24 l2 -1.3 M39 26 l1.6 -1.1 M19 21 l2.4 -1.6 M24 8 l2 -1.3" stroke="#9fd7ad" stroke-width="1.1"/><circle cx="28.2" cy="3.4" r="1.7" fill="#efe6b5"/><circle cx="46.8" cy="29" r="1.7" fill="#efe6b5"/><circle cx="21.3" cy="46.5" r="1.7" fill="#f3f3ea"/><circle cx="2.9" cy="21.6" r="1.7" fill="#efe6b5"/><circle cx="32.5" cy="19.5" r="1.3" fill="#8a6d1f"/><circle cx="17" cy="30.3" r="1.3" fill="#6b6a3a"/></svg></svg>
<span style="left:1032.50px;top:840.00px;font-size:28px;color:#0d6efd;letter-spacing:-0.442px;line-height:31px;">TB1 | Test Board 1</span>
<svg style="left:1761.10px;top:834.26px;width:28.30px;height:27.60px;" viewBox="0 0 512 512" preserveAspectRatio="none"><path fill="#212529" d="M501.1 395.7L384 278.6c-23.1-23.1-57.6-27.6-85.4-13.9L192 158.1V96L64 0 0 64l96 128h62.1l106.6 106.6c-13.6 27.8-9.2 62.3 13.9 85.4l117.1 117.1c14.6 14.6 38.2 14.6 52.7 0l52.7-52.7c14.5-14.6 14.5-38.2 0-52.7zM331.7 225c28.3 0 54.9 11 74.9 31l19.4 19.4c15.8-6.9 30.8-16.5 43.8-29.5 37.1-37.1 49.7-89.3 37.9-136.7-2.2-9-13.5-12.1-20.1-5.5l-74.4 74.4-67.9-11.3L334 98.9l74.4-74.4c6.6-6.6 3.4-17.9-5.7-20.2-47.4-11.7-99.6.9-136.6 37.9-28.5 28.5-41.9 66.1-41.2 103.6l82.1 82.1c8.1-1.9 16.5-2.9 24.7-2.9zm-103.9 82l-56.7-56.7L18.7 402.8c-25 25-25 65.5 0 90.5s65.5 25 90.5 0l123.6-123.6c-7.6-19.9-9.9-41.6-5-62.7zM64 472c-13.2 0-24-10.8-24-24 0-13.3 10.7-24 24-24s24 10.7 24 24c0 13.2-10.7 24-24 24z"/></svg>
<svg style="left:1741.00px;top:839.66px;width:12.30px;height:19.20px;" viewBox="0 0 288 512" preserveAspectRatio="none"><path fill="#212529" d="M209.2 233.4l-108-31.6C88.7 198.2 80 186.5 80 173.5c0-16.3 13.2-29.5 29.5-29.5h66.3c12.2 0 24.2 3.7 34.2 10.5 6.1 4.1 14.3 3.1 19.5-2l34.8-34c7.1-6.9 6.1-18.4-1.8-24.5C238 74.8 207.4 64.1 176 64V16c0-8.8-7.2-16-16-16h-32c-8.8 0-16 7.2-16 16v48h-2.5C45.8 64-5.4 118.7.5 183.6c4.2 46.1 39.4 83.6 83.8 96.6l102.5 30c12.5 3.7 21.2 15.3 21.2 28.3 0 16.3-13.2 29.5-29.5 29.5h-66.3C100 368 88 364.3 78 357.5c-6.1-4.1-14.3-3.1-19.5 2l-34.8 34c-7.1 6.9-6.1 18.4 1.8 24.5 24.5 19.2 55.1 29.9 86.5 30v48c0 8.8 7.2 16 16 16h32c8.8 0 16-7.2 16-16v-48.2c46.6-.9 90.3-28.6 105.7-72.7 21.5-61.6-14.6-124.8-72.5-141.7z"/></svg>
<div style="left:1823.80px;top:837.96px;width:219.30px;height:40.00px;background:#eeeef5;border-radius:20px;overflow:hidden;"></div>
<div style="left:1823.8px;top:837.96px;width:219.3px;height:40px;border-radius:20px;overflow:hidden;"><div style="left:0;top:0;width:109.7px;height:40px;background:#f0c680;"></div></div>
<span style="left:1897.44px;top:844.00px;font-size:23.5px;color:#3a3a3a;letter-spacing:0.000px;line-height:26px;">25 / 50</span>
<div style="left:2074.00px;top:842.56px;width:141.00px;height:37.20px;background:#0d6efd;border-radius:18.6px;"></div>
<span style="left:2087.96px;top:851.00px;font-size:21.5px;color:#fff;letter-spacing:0.001px;line-height:24px;font-weight:700;">Production</span>
<span style="left:2285.79px;top:844.00px;font-size:28px;color:#212529;letter-spacing:0.351px;line-height:31px;">2022-05-25</span>
<span style="left:2521.61px;top:844.00px;font-size:28px;color:#212529;letter-spacing:0.811px;line-height:31px;">admin</span>
<span style="left:2784.46px;top:844.00px;font-size:28px;color:#212529;letter-spacing:0.000px;line-height:31px;">-</span>
<span style="left:3089.56px;top:844.00px;font-size:28px;color:#212529;letter-spacing:0.000px;line-height:31px;">-</span>
<span style="left:3391.06px;top:844.00px;font-size:28px;color:#212529;letter-spacing:0.000px;line-height:31px;">-</span>
<div style="left:55px;top:916px;width:26px;height:26px;box-sizing:border-box;border:2px solid #767676;border-radius:5px;background:#fff;"></div>
<span style="left:185.30px;top:917.00px;font-size:28px;color:#0d6efd;letter-spacing:0.010px;line-height:31px;">BO-0013</span>
<span style="left:376.90px;top:917.00px;font-size:28px;color:#212529;letter-spacing:0.231px;line-height:31px;">Required parts for Build 0010</span>
<svg style="left:948px;top:902.4px;width:56px;height:56px" viewBox="0 0 56 56"><rect x="1" y="1" width="54" height="54" fill="#fff" stroke="#c8c8ee" stroke-width="2"/><svg x="2" y="2" width="52" height="52" viewBox="0 0 52 52"><rect width="52" height="52" fill="#ececec"/><path d="M28.2 2.1 L48.3 29.1 L21.1 48 L1.4 21.5 Z" fill="#3f9a56"/><path d="M28 5.5 L45 28.5 L21.6 44.6 L4.6 21.8 Z" fill="#4aa862"/><rect x="17.2" y="10.2" width="7.6" height="7.6" fill="#33463d" transform="rotate(53 21 14)"/><rect x="28.8" y="29.6" width="7.4" height="7.4" fill="#2b3c35" transform="rotate(53 32.4 33.3)"/><path d="M8 22 L14 30 M11 19.5 L18 29 M24 22 L31 18 M27 26 L36 20.5 M16 33 L22 41 M35 12 L41 20 M38 23 L43 27" stroke="#2f7f45" stroke-width="1.6" fill="none"/><path d="M12 25 l2 -1.4 M15 29 l2 -1.4 M22 36 l2.2 -1.5 M25 31 l2 -1.3 M33 15 l2 -1.4 M30 24 l2 -1.3 M39 26 l1.6 -1.1 M19 21 l2.4 -1.6 M24 8 l2 -1.3" stroke="#9fd7ad" stroke-width="1.1"/><circle cx="28.2" cy="3.4" r="1.7" fill="#efe6b5"/><circle cx="46.8" cy="29" r="1.7" fill="#efe6b5"/><circle cx="21.3" cy="46.5" r="1.7" fill="#f3f3ea"/><circle cx="2.9" cy="21.6" r="1.7" fill="#efe6b5"/><circle cx="32.5" cy="19.5" r="1.3" fill="#8a6d1f"/><circle cx="17" cy="30.3" r="1.3" fill="#6b6a3a"/></svg></svg>
<span style="left:1032.50px;top:912.00px;font-size:28px;color:#0d6efd;letter-spacing:-0.426px;line-height:31px;">TB3 | Test Board 3</span>
<svg style="left:1761.10px;top:906.60px;width:28.30px;height:27.60px;" viewBox="0 0 512 512" preserveAspectRatio="none"><path fill="#212529" d="M501.1 395.7L384 278.6c-23.1-23.1-57.6-27.6-85.4-13.9L192 158.1V96L64 0 0 64l96 128h62.1l106.6 106.6c-13.6 27.8-9.2 62.3 13.9 85.4l117.1 117.1c14.6 14.6 38.2 14.6 52.7 0l52.7-52.7c14.5-14.6 14.5-38.2 0-52.7zM331.7 225c28.3 0 54.9 11 74.9 31l19.4 19.4c15.8-6.9 30.8-16.5 43.8-29.5 37.1-37.1 49.7-89.3 37.9-136.7-2.2-9-13.5-12.1-20.1-5.5l-74.4 74.4-67.9-11.3L334 98.9l74.4-74.4c6.6-6.6 3.4-17.9-5.7-20.2-47.4-11.7-99.6.9-136.6 37.9-28.5 28.5-41.9 66.1-41.2 103.6l82.1 82.1c8.1-1.9 16.5-2.9 24.7-2.9zm-103.9 82l-56.7-56.7L18.7 402.8c-25 25-25 65.5 0 90.5s65.5 25 90.5 0l123.6-123.6c-7.6-19.9-9.9-41.6-5-62.7zM64 472c-13.2 0-24-10.8-24-24 0-13.3 10.7-24 24-24s24 10.7 24 24c0 13.2-10.7 24-24 24z"/></svg>
<svg style="left:1741.00px;top:912.00px;width:12.30px;height:19.20px;" viewBox="0 0 288 512" preserveAspectRatio="none"><path fill="#212529" d="M209.2 233.4l-108-31.6C88.7 198.2 80 186.5 80 173.5c0-16.3 13.2-29.5 29.5-29.5h66.3c12.2 0 24.2 3.7 34.2 10.5 6.1 4.1 14.3 3.1 19.5-2l34.8-34c7.1-6.9 6.1-18.4-1.8-24.5C238 74.8 207.4 64.1 176 64V16c0-8.8-7.2-16-16-16h-32c-8.8 0-16 7.2-16 16v48h-2.5C45.8 64-5.4 118.7.5 183.6c4.2 46.1 39.4 83.6 83.8 96.6l102.5 30c12.5 3.7 21.2 15.3 21.2 28.3 0 16.3-13.2 29.5-29.5 29.5h-66.3C100 368 88 364.3 78 357.5c-6.1-4.1-14.3-3.1-19.5 2l-34.8 34c-7.1 6.9-6.1 18.4 1.8 24.5 24.5 19.2 55.1 29.9 86.5 30v48c0 8.8 7.2 16 16 16h32c8.8 0 16-7.2 16-16v-48.2c46.6-.9 90.3-28.6 105.7-72.7 21.5-61.6-14.6-124.8-72.5-141.7z"/></svg>
<div style="left:1823.80px;top:910.30px;width:219.30px;height:40.00px;background:#eeeef5;border-radius:20px;overflow:hidden;"></div>
<span style="left:1904.10px;top:916.00px;font-size:23.5px;color:#3a3a3a;letter-spacing:0.000px;line-height:26px;">0 / 50</span>
<div style="left:2074.00px;top:914.90px;width:110.80px;height:37.20px;background:#6c757d;border-radius:18.6px;"></div>
<span style="left:2087.36px;top:923.00px;font-size:21.5px;color:#fff;letter-spacing:0.012px;line-height:24px;font-weight:700;">Pending</span>
<span style="left:2285.79px;top:917.00px;font-size:28px;color:#212529;letter-spacing:0.351px;line-height:31px;">2022-05-25</span>
<span style="left:2521.61px;top:917.00px;font-size:28px;color:#212529;letter-spacing:0.811px;line-height:31px;">admin</span>
<span style="left:2784.46px;top:917.00px;font-size:28px;color:#212529;letter-spacing:0.000px;line-height:31px;">-</span>
<span style="left:3089.56px;top:917.00px;font-size:28px;color:#212529;letter-spacing:0.000px;line-height:31px;">-</span>
<span style="left:3391.06px;top:917.00px;font-size:28px;color:#212529;letter-spacing:0.000px;line-height:31px;">-</span>
<div style="left:55px;top:988px;width:26px;height:26px;box-sizing:border-box;border:2px solid #767676;border-radius:5px;background:#fff;"></div>
<span style="left:153.40px;top:989.00px;font-size:28px;color:#0d6efd;letter-spacing:-0.059px;line-height:31px;">BO-0014</span>
<span style="left:376.90px;top:989.00px;font-size:28px;color:#212529;letter-spacing:0.209px;line-height:31px;">Making tables for SO 0003</span>
<svg style="left:948px;top:974.7px;width:56px;height:56px" viewBox="0 0 56 56"><rect x="1" y="1" width="54" height="54" fill="#fff" stroke="#c8c8ee" stroke-width="2"/><svg x="2" y="2" width="52" height="52" viewBox="0 0 52 52"><rect width="52" height="52" fill="#fff"/><path d="M12.7 15.5 L17.3 16 L16.9 29.6 Q15 31.4 13.1 29.6 Z" fill="#1a43b8"/><path d="M46.4 14.5 L50.9 13 L50.8 33.8 Q48.8 35.6 46.9 33.8 Z" fill="#1a43b8"/><path d="M1.7 14.2 L6.5 15 L6.2 37 Q3.8 39 1.4 37 Z" fill="#2050cf"/><path d="M39.2 18.3 L44.9 19 L44.7 43.2 Q42.2 45.2 39.7 43.2 Z" fill="#2050cf"/><path d="M1.8 11.7 L43.8 15.9 L43.8 19.2 L1.8 14.8 Z" fill="#1c46c2"/><path d="M43.8 15.9 L50.4 10.2 L50.4 13.6 L43.8 19.2 Z" fill="#1538a3"/><path d="M1.8 11.7 Q2 10.8 13.5 7.1 L50.4 10.2 Q50.6 11 43.8 15.9 Z" fill="#2a5bd9"/></svg></svg>
<span style="left:1032.50px;top:985.00px;font-size:28px;color:#0d6efd;letter-spacing:-0.292px;line-height:31px;">Blue Square Table</span>
<svg style="left:1761.10px;top:978.94px;width:28.30px;height:27.60px;" viewBox="0 0 512 512" preserveAspectRatio="none"><path fill="#212529" d="M501.1 395.7L384 278.6c-23.1-23.1-57.6-27.6-85.4-13.9L192 158.1V96L64 0 0 64l96 128h62.1l106.6 106.6c-13.6 27.8-9.2 62.3 13.9 85.4l117.1 117.1c14.6 14.6 38.2 14.6 52.7 0l52.7-52.7c14.5-14.6 14.5-38.2 0-52.7zM331.7 225c28.3 0 54.9 11 74.9 31l19.4 19.4c15.8-6.9 30.8-16.5 43.8-29.5 37.1-37.1 49.7-89.3 37.9-136.7-2.2-9-13.5-12.1-20.1-5.5l-74.4 74.4-67.9-11.3L334 98.9l74.4-74.4c6.6-6.6 3.4-17.9-5.7-20.2-47.4-11.7-99.6.9-136.6 37.9-28.5 28.5-41.9 66.1-41.2 103.6l82.1 82.1c8.1-1.9 16.5-2.9 24.7-2.9zm-103.9 82l-56.7-56.7L18.7 402.8c-25 25-25 65.5 0 90.5s65.5 25 90.5 0l123.6-123.6c-7.6-19.9-9.9-41.6-5-62.7zM64 472c-13.2 0-24-10.8-24-24 0-13.3 10.7-24 24-24s24 10.7 24 24c0 13.2-10.7 24-24 24z"/></svg>
<svg style="left:1741.00px;top:984.34px;width:12.30px;height:19.20px;" viewBox="0 0 288 512" preserveAspectRatio="none"><path fill="#212529" d="M209.2 233.4l-108-31.6C88.7 198.2 80 186.5 80 173.5c0-16.3 13.2-29.5 29.5-29.5h66.3c12.2 0 24.2 3.7 34.2 10.5 6.1 4.1 14.3 3.1 19.5-2l34.8-34c7.1-6.9 6.1-18.4-1.8-24.5C238 74.8 207.4 64.1 176 64V16c0-8.8-7.2-16-16-16h-32c-8.8 0-16 7.2-16 16v48h-2.5C45.8 64-5.4 118.7.5 183.6c4.2 46.1 39.4 83.6 83.8 96.6l102.5 30c12.5 3.7 21.2 15.3 21.2 28.3 0 16.3-13.2 29.5-29.5 29.5h-66.3C100 368 88 364.3 78 357.5c-6.1-4.1-14.3-3.1-19.5 2l-34.8 34c-7.1 6.9-6.1 18.4 1.8 24.5 24.5 19.2 55.1 29.9 86.5 30v48c0 8.8 7.2 16 16 16h32c8.8 0 16-7.2 16-16v-48.2c46.6-.9 90.3-28.6 105.7-72.7 21.5-61.6-14.6-124.8-72.5-141.7z"/></svg>
<div style="left:1823.80px;top:982.64px;width:219.30px;height:40.00px;background:#eeeef5;border-radius:20px;overflow:hidden;"></div>
<span style="left:1897.57px;top:989.00px;font-size:23.5px;color:#3a3a3a;letter-spacing:0.000px;line-height:26px;">0 / 100</span>
<div style="left:2074.00px;top:987.24px;width:110.80px;height:37.20px;background:#6c757d;border-radius:18.6px;"></div>
<span style="left:2087.36px;top:995.00px;font-size:21.5px;color:#fff;letter-spacing:0.012px;line-height:24px;font-weight:700;">Pending</span>
<span style="left:2285.79px;top:989.00px;font-size:28px;color:#212529;letter-spacing:0.351px;line-height:31px;">2022-05-25</span>
<span style="left:2521.61px;top:989.00px;font-size:28px;color:#212529;letter-spacing:0.811px;line-height:31px;">admin</span>
<span style="left:2784.46px;top:989.00px;font-size:28px;color:#212529;letter-spacing:0.000px;line-height:31px;">-</span>
<span style="left:3089.56px;top:989.00px;font-size:28px;color:#212529;letter-spacing:0.000px;line-height:31px;">-</span>
<span style="left:3391.06px;top:989.00px;font-size:28px;color:#212529;letter-spacing:0.000px;line-height:31px;">-</span>
<div style="left:55px;top:1061px;width:26px;height:26px;box-sizing:border-box;border:2px solid #767676;border-radius:5px;background:#fff;"></div>
<span style="left:153.40px;top:1061.00px;font-size:28px;color:#0d6efd;letter-spacing:0.010px;line-height:31px;">BO-0016</span>
<span style="left:376.90px;top:1061.00px;font-size:28px;color:#212529;letter-spacing:0.312px;line-height:31px;">Making widgets for SO 0003</span>
<svg style="left:948px;top:1047.1px;width:56px;height:56px" viewBox="0 0 56 56"><rect x="1" y="1" width="54" height="54" fill="#fff" stroke="#c8c8ee" stroke-width="2"/><svg x="2" y="2" width="52" height="52" viewBox="0 0 52 52"><rect width="25" height="25" fill="#ed1c24"/><rect x="25" width="27" height="25" fill="#ffaec9"/><rect y="25" width="25" height="27" fill="#99d9ea"/><rect x="25" y="25" width="27" height="27" fill="#22b14c"/></svg></svg>
<span style="left:1032.50px;top:1057.00px;font-size:28px;color:#0d6efd;letter-spacing:0.306px;line-height:31px;">Widget Assembly Variant</span>
<svg style="left:1760.80px;top:1050.68px;width:28.60px;height:28.60px;" viewBox="0 0 512 512" preserveAspectRatio="none"><path fill="#212529" d="M502.61 233.32L278.68 9.39c-12.52-12.52-32.83-12.52-45.36 0L9.39 233.32c-12.52 12.53-12.52 32.83 0 45.36l223.93 223.93c12.52 12.53 32.83 12.53 45.36 0l223.93-223.93c12.52-12.53 12.52-32.83 0-45.36zm-100.98 12.56l-84.21 77.73c-5.12 4.73-13.43 1.1-13.43-5.88V264h-96v64c0 4.42-3.58 8-8 8h-32c-4.42 0-8-3.58-8-8v-80c0-17.67 14.33-32 32-32h112v-53.73c0-6.97 8.3-10.61 13.43-5.88l84.21 77.73c3.43 3.17 3.43 8.59 0 11.76z"/></svg>
<svg style="left:1725.00px;top:1051.28px;width:28.30px;height:27.60px;" viewBox="0 0 512 512" preserveAspectRatio="none"><path fill="#212529" d="M501.1 395.7L384 278.6c-23.1-23.1-57.6-27.6-85.4-13.9L192 158.1V96L64 0 0 64l96 128h62.1l106.6 106.6c-13.6 27.8-9.2 62.3 13.9 85.4l117.1 117.1c14.6 14.6 38.2 14.6 52.7 0l52.7-52.7c14.5-14.6 14.5-38.2 0-52.7zM331.7 225c28.3 0 54.9 11 74.9 31l19.4 19.4c15.8-6.9 30.8-16.5 43.8-29.5 37.1-37.1 49.7-89.3 37.9-136.7-2.2-9-13.5-12.1-20.1-5.5l-74.4 74.4-67.9-11.3L334 98.9l74.4-74.4c6.6-6.6 3.4-17.9-5.7-20.2-47.4-11.7-99.6.9-136.6 37.9-28.5 28.5-41.9 66.1-41.2 103.6l82.1 82.1c8.1-1.9 16.5-2.9 24.7-2.9zm-103.9 82l-56.7-56.7L18.7 402.8c-25 25-25 65.5 0 90.5s65.5 25 90.5 0l123.6-123.6c-7.6-19.9-9.9-41.6-5-62.7zM64 472c-13.2 0-24-10.8-24-24 0-13.3 10.7-24 24-24s24 10.7 24 24c0 13.2-10.7 24-24 24z"/></svg>
<svg style="left:1704.90px;top:1056.68px;width:12.30px;height:19.20px;" viewBox="0 0 288 512" preserveAspectRatio="none"><path fill="#212529" d="M209.2 233.4l-108-31.6C88.7 198.2 80 186.5 80 173.5c0-16.3 13.2-29.5 29.5-29.5h66.3c12.2 0 24.2 3.7 34.2 10.5 6.1 4.1 14.3 3.1 19.5-2l34.8-34c7.1-6.9 6.1-18.4-1.8-24.5C238 74.8 207.4 64.1 176 64V16c0-8.8-7.2-16-16-16h-32c-8.8 0-16 7.2-16 16v48h-2.5C45.8 64-5.4 118.7.5 183.6c4.2 46.1 39.4 83.6 83.8 96.6l102.5 30c12.5 3.7 21.2 15.3 21.2 28.3 0 16.3-13.2 29.5-29.5 29.5h-66.3C100 368 88 364.3 78 357.5c-6.1-4.1-14.3-3.1-19.5 2l-34.8 34c-7.1 6.9-6.1 18.4 1.8 24.5 24.5 19.2 55.1 29.9 86.5 30v48c0 8.8 7.2 16 16 16h32c8.8 0 16-7.2 16-16v-48.2c46.6-.9 90.3-28.6 105.7-72.7 21.5-61.6-14.6-124.8-72.5-141.7z"/></svg>
<div style="left:1823.80px;top:1054.98px;width:219.30px;height:40.00px;background:#eeeef5;border-radius:20px;overflow:hidden;"></div>
<span style="left:1904.14px;top:1061.00px;font-size:23.5px;color:#3a3a3a;letter-spacing:0.000px;line-height:26px;">0 / 75</span>
<div style="left:2074.00px;top:1059.58px;width:110.80px;height:37.20px;background:#6c757d;border-radius:18.6px;"></div>
<span style="left:2087.36px;top:1068.00px;font-size:21.5px;color:#fff;letter-spacing:0.012px;line-height:24px;font-weight:700;">Pending</span>
<span style="left:2285.79px;top:1061.00px;font-size:28px;color:#212529;letter-spacing:0.351px;line-height:31px;">2022-05-25</span>
<span style="left:2521.61px;top:1061.00px;font-size:28px;color:#212529;letter-spacing:0.811px;line-height:31px;">admin</span>
<span style="left:2784.46px;top:1061.00px;font-size:28px;color:#212529;letter-spacing:0.000px;line-height:31px;">-</span>
<span style="left:3089.56px;top:1061.00px;font-size:28px;color:#212529;letter-spacing:0.000px;line-height:31px;">-</span>
<span style="left:3391.06px;top:1061.00px;font-size:28px;color:#212529;letter-spacing:0.000px;line-height:31px;">-</span>
<div style="left:55px;top:1133px;width:26px;height:26px;box-sizing:border-box;border:2px solid #767676;border-radius:5px;background:#fff;"></div>
<span style="left:153.40px;top:1134.00px;font-size:28px;color:#0d6efd;letter-spacing:0.039px;line-height:31px;">BO-0017</span>
<span style="left:378.01px;top:1134.00px;font-size:28px;color:#212529;letter-spacing:-0.471px;line-height:31px;">asdfsaf</span>
<svg style="left:948px;top:1119.4px;width:56px;height:56px" viewBox="0 0 56 56"><rect x="1" y="1" width="54" height="54" fill="#fff" stroke="#c8c8ee" stroke-width="2"/><svg x="2" y="2" width="52" height="52" viewBox="0 0 52 52"><rect width="52" height="52" fill="#fff"/><path d="M12.7 15.5 L17.3 16 L16.9 29.6 Q15 31.4 13.1 29.6 Z" fill="#1a43b8"/><path d="M46.4 14.5 L50.9 13 L50.8 33.8 Q48.8 35.6 46.9 33.8 Z" fill="#1a43b8"/><path d="M1.7 14.2 L6.5 15 L6.2 37 Q3.8 39 1.4 37 Z" fill="#2050cf"/><path d="M39.2 18.3 L44.9 19 L44.7 43.2 Q42.2 45.2 39.7 43.2 Z" fill="#2050cf"/><path d="M1.8 11.7 L43.8 15.9 L43.8 19.2 L1.8 14.8 Z" fill="#1c46c2"/><path d="M43.8 15.9 L50.4 10.2 L50.4 13.6 L43.8 19.2 Z" fill="#1538a3"/><path d="M1.8 11.7 Q2 10.8 13.5 7.1 L50.4 10.2 Q50.6 11 43.8 15.9 Z" fill="#2a5bd9"/></svg></svg>
<span style="left:1032.50px;top:1129.00px;font-size:28px;color:#0d6efd;letter-spacing:-0.292px;line-height:31px;">Blue Square Table</span>
<svg style="left:1761.10px;top:1123.62px;width:28.30px;height:27.60px;" viewBox="0 0 512 512" preserveAspectRatio="none"><path fill="#212529" d="M501.1 395.7L384 278.6c-23.1-23.1-57.6-27.6-85.4-13.9L192 158.1V96L64 0 0 64l96 128h62.1l106.6 106.6c-13.6 27.8-9.2 62.3 13.9 85.4l117.1 117.1c14.6 14.6 38.2 14.6 52.7 0l52.7-52.7c14.5-14.6 14.5-38.2 0-52.7zM331.7 225c28.3 0 54.9 11 74.9 31l19.4 19.4c15.8-6.9 30.8-16.5 43.8-29.5 37.1-37.1 49.7-89.3 37.9-136.7-2.2-9-13.5-12.1-20.1-5.5l-74.4 74.4-67.9-11.3L334 98.9l74.4-74.4c6.6-6.6 3.4-17.9-5.7-20.2-47.4-11.7-99.6.9-136.6 37.9-28.5 28.5-41.9 66.1-41.2 103.6l82.1 82.1c8.1-1.9 16.5-2.9 24.7-2.9zm-103.9 82l-56.7-56.7L18.7 402.8c-25 25-25 65.5 0 90.5s65.5 25 90.5 0l123.6-123.6c-7.6-19.9-9.9-41.6-5-62.7zM64 472c-13.2 0-24-10.8-24-24 0-13.3 10.7-24 24-24s24 10.7 24 24c0 13.2-10.7 24-24 24z"/></svg>
<svg style="left:1741.00px;top:1129.02px;width:12.30px;height:19.20px;" viewBox="0 0 288 512" preserveAspectRatio="none"><path fill="#212529" d="M209.2 233.4l-108-31.6C88.7 198.2 80 186.5 80 173.5c0-16.3 13.2-29.5 29.5-29.5h66.3c12.2 0 24.2 3.7 34.2 10.5 6.1 4.1 14.3 3.1 19.5-2l34.8-34c7.1-6.9 6.1-18.4-1.8-24.5C238 74.8 207.4 64.1 176 64V16c0-8.8-7.2-16-16-16h-32c-8.8 0-16 7.2-16 16v48h-2.5C45.8 64-5.4 118.7.5 183.6c4.2 46.1 39.4 83.6 83.8 96.6l102.5 30c12.5 3.7 21.2 15.3 21.2 28.3 0 16.3-13.2 29.5-29.5 29.5h-66.3C100 368 88 364.3 78 357.5c-6.1-4.1-14.3-3.1-19.5 2l-34.8 34c-7.1 6.9-6.1 18.4 1.8 24.5 24.5 19.2 55.1 29.9 86.5 30v48c0 8.8 7.2 16 16 16h32c8.8 0 16-7.2 16-16v-48.2c46.6-.9 90.3-28.6 105.7-72.7 21.5-61.6-14.6-124.8-72.5-141.7z"/></svg>
<div style="left:1823.80px;top:1127.32px;width:219.30px;height:40.00px;background:#eeeef5;border-radius:20px;overflow:hidden;"></div>
<span style="left:1910.75px;top:1133.00px;font-size:23.5px;color:#3a3a3a;letter-spacing:0.000px;line-height:26px;">0 / 1</span>
<div style="left:2074.00px;top:1131.92px;width:110.80px;height:37.20px;background:#6c757d;border-radius:18.6px;"></div>
<span style="left:2087.36px;top:1140.00px;font-size:21.5px;color:#fff;letter-spacing:0.012px;line-height:24px;font-weight:700;">Pending</span>
<span style="left:2285.79px;top:1134.00px;font-size:28px;color:#212529;letter-spacing:0.355px;line-height:31px;">2022-06-28</span>
<span style="left:2521.61px;top:1134.00px;font-size:28px;color:#212529;letter-spacing:0.811px;line-height:31px;">admin</span>
<span style="left:2784.46px;top:1134.00px;font-size:28px;color:#212529;letter-spacing:0.000px;line-height:31px;">-</span>
<span style="left:3089.56px;top:1134.00px;font-size:28px;color:#212529;letter-spacing:0.000px;line-height:31px;">-</span>
<span style="left:3391.06px;top:1134.00px;font-size:28px;color:#212529;letter-spacing:0.000px;line-height:31px;">-</span>
<div style="left:55px;top:1205px;width:26px;height:26px;box-sizing:border-box;border:2px solid #767676;border-radius:5px;background:#fff;"></div>
<span style="left:153.40px;top:1206.00px;font-size:28px;color:#0d6efd;letter-spacing:0.026px;line-height:31px;">BO-0909</span>
<span style="left:378.01px;top:1206.00px;font-size:28px;color:#212529;letter-spacing:-0.592px;line-height:31px;">asdf</span>
<svg style="left:948px;top:1191.8px;width:56px;height:56px" viewBox="0 0 56 56"><rect x="1" y="1" width="54" height="54" fill="#fff" stroke="#c8c8ee" stroke-width="2"/><svg x="2" y="2" width="52" height="52" viewBox="0 0 52 52"><rect width="52" height="52" fill="#fff"/><path d="M3.5 15.5 L8.5 17.5 L7.9 34.3 Q6 36.2 4 34.6 Z" fill="#0f63c0"/><path d="M43.5 17.5 L48.5 15.5 L48.1 34.6 Q46.2 36.2 44.2 34.3 Z" fill="#0f63c0"/><path d="M23.3 17 L27.7 17 L27.3 30 Q25.5 31.6 23.7 30 Z" fill="#0f63c0"/><path d="M9.3 17 L14.6 18 L14.1 43 Q11.3 45 8.4 43 Z" fill="#146dce"/><path d="M37.6 18 L43 17 L43.9 43 Q41 45 38.1 43 Z" fill="#146dce"/><ellipse cx="26" cy="13.6" rx="24.7" ry="5.2" fill="#0f63c0"/><ellipse cx="26" cy="12.4" rx="24.7" ry="5.1" fill="#1b7adb"/></svg></svg>
<span style="left:1032.50px;top:1202.00px;font-size:28px;color:#0d6efd;letter-spacing:-0.140px;line-height:31px;">Blue Round Table</span>
<svg style="left:1761.10px;top:1195.96px;width:28.30px;height:27.60px;" viewBox="0 0 512 512" preserveAspectRatio="none"><path fill="#212529" d="M501.1 395.7L384 278.6c-23.1-23.1-57.6-27.6-85.4-13.9L192 158.1V96L64 0 0 64l96 128h62.1l106.6 106.6c-13.6 27.8-9.2 62.3 13.9 85.4l117.1 117.1c14.6 14.6 38.2 14.6 52.7 0l52.7-52.7c14.5-14.6 14.5-38.2 0-52.7zM331.7 225c28.3 0 54.9 11 74.9 31l19.4 19.4c15.8-6.9 30.8-16.5 43.8-29.5 37.1-37.1 49.7-89.3 37.9-136.7-2.2-9-13.5-12.1-20.1-5.5l-74.4 74.4-67.9-11.3L334 98.9l74.4-74.4c6.6-6.6 3.4-17.9-5.7-20.2-47.4-11.7-99.6.9-136.6 37.9-28.5 28.5-41.9 66.1-41.2 103.6l82.1 82.1c8.1-1.9 16.5-2.9 24.7-2.9zm-103.9 82l-56.7-56.7L18.7 402.8c-25 25-25 65.5 0 90.5s65.5 25 90.5 0l123.6-123.6c-7.6-19.9-9.9-41.6-5-62.7zM64 472c-13.2 0-24-10.8-24-24 0-13.3 10.7-24 24-24s24 10.7 24 24c0 13.2-10.7 24-24 24z"/></svg>
<svg style="left:1741.00px;top:1201.36px;width:12.30px;height:19.20px;" viewBox="0 0 288 512" preserveAspectRatio="none"><path fill="#212529" d="M209.2 233.4l-108-31.6C88.7 198.2 80 186.5 80 173.5c0-16.3 13.2-29.5 29.5-29.5h66.3c12.2 0 24.2 3.7 34.2 10.5 6.1 4.1 14.3 3.1 19.5-2l34.8-34c7.1-6.9 6.1-18.4-1.8-24.5C238 74.8 207.4 64.1 176 64V16c0-8.8-7.2-16-16-16h-32c-8.8 0-16 7.2-16 16v48h-2.5C45.8 64-5.4 118.7.5 183.6c4.2 46.1 39.4 83.6 83.8 96.6l102.5 30c12.5 3.7 21.2 15.3 21.2 28.3 0 16.3-13.2 29.5-29.5 29.5h-66.3C100 368 88 364.3 78 357.5c-6.1-4.1-14.3-3.1-19.5 2l-34.8 34c-7.1 6.9-6.1 18.4 1.8 24.5 24.5 19.2 55.1 29.9 86.5 30v48c0 8.8 7.2 16 16 16h32c8.8 0 16-7.2 16-16v-48.2c46.6-.9 90.3-28.6 105.7-72.7 21.5-61.6-14.6-124.8-72.5-141.7z"/></svg>
<div style="left:1823.80px;top:1199.66px;width:219.30px;height:40.00px;background:#eeeef5;border-radius:20px;overflow:hidden;"></div>
<span style="left:1910.75px;top:1206.00px;font-size:23.5px;color:#3a3a3a;letter-spacing:0.000px;line-height:26px;">0 / 1</span>
<div style="left:2074.00px;top:1204.26px;width:110.80px;height:37.20px;background:#6c757d;border-radius:18.6px;"></div>
<span style="left:2087.36px;top:1212.00px;font-size:21.5px;color:#fff;letter-spacing:0.012px;line-height:24px;font-weight:700;">Pending</span>
<span style="left:2285.79px;top:1206.00px;font-size:28px;color:#212529;letter-spacing:0.355px;line-height:31px;">2022-06-28</span>
<span style="left:2521.61px;top:1206.00px;font-size:28px;color:#212529;letter-spacing:0.811px;line-height:31px;">admin</span>
<span style="left:2784.46px;top:1206.00px;font-size:28px;color:#212529;letter-spacing:0.000px;line-height:31px;">-</span>
<span style="left:3089.56px;top:1206.00px;font-size:28px;color:#212529;letter-spacing:0.000px;line-height:31px;">-</span>
<span style="left:3391.06px;top:1206.00px;font-size:28px;color:#212529;letter-spacing:0.000px;line-height:31px;">-</span>
</div>
</body></html>
